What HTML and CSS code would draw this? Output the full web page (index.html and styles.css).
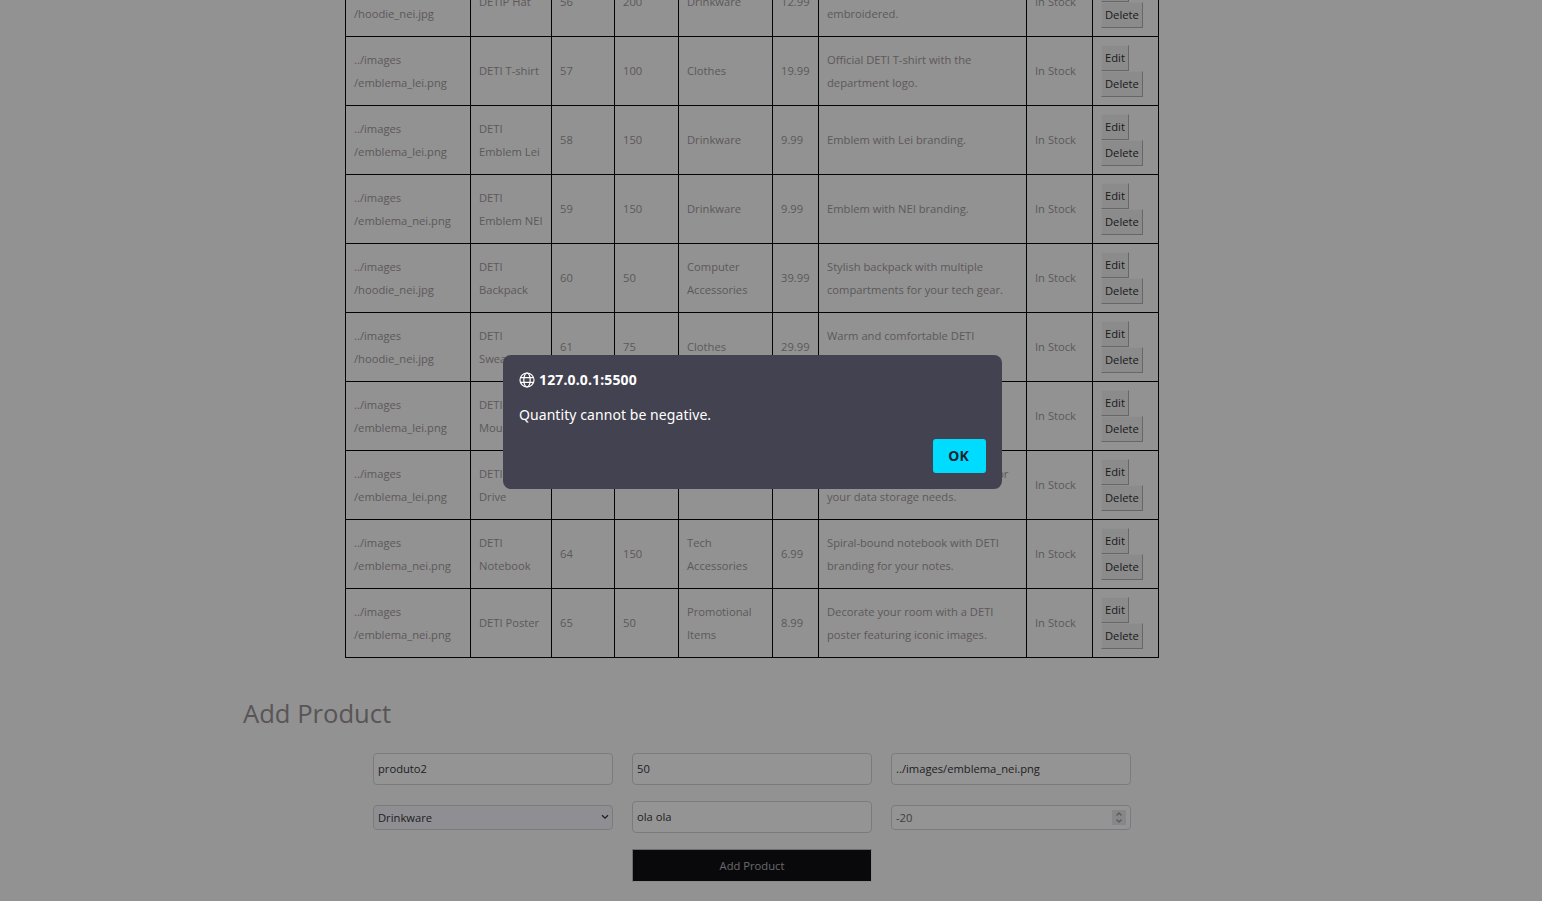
FILE: index.html
```html
<!DOCTYPE html>
<html lang="en">
<head>
    <meta charset="UTF-8">
    <title>Admin Products</title>
    <link rel="stylesheet" href="styles.css">
</head>
<body>
    <div class="page">
        <table class="products">
            <colgroup>
                <col class="c-img"><col class="c-name"><col class="c-id"><col class="c-qty"><col class="c-cat">
                <col class="c-price"><col class="c-desc"><col class="c-stock"><col class="c-act">
            </colgroup>
            <tbody>
                <tr>
                    <td>../images<wbr>/hoodie_nei.jpg</td><td>DETIP Hat</td><td>56</td><td>200</td><td>Drinkware</td><td>12.99</td>
                    <td>Comfortable hat with DETI logo embroidered.</td><td>In Stock</td>
                    <td><button class="act">Edit</button> <button class="act">Delete</button></td>
                </tr>
                <tr>
                    <td>../images<wbr>/emblema_lei.png</td><td>DETI T-shirt</td><td>57</td><td>100</td><td>Clothes</td><td>19.99</td>
                    <td>Official DETI T-shirt with the department logo.</td><td>In Stock</td>
                    <td><button class="act">Edit</button> <button class="act">Delete</button></td>
                </tr>
                <tr>
                    <td>../images<wbr>/emblema_lei.png</td><td>DETI Emblem Lei</td><td>58</td><td>150</td><td>Drinkware</td><td>9.99</td>
                    <td>Emblem with Lei branding.</td><td>In Stock</td>
                    <td><button class="act">Edit</button> <button class="act">Delete</button></td>
                </tr>
                <tr>
                    <td>../images<wbr>/emblema_nei.png</td><td>DETI Emblem NEI</td><td>59</td><td>150</td><td>Drinkware</td><td>9.99</td>
                    <td>Emblem with NEI branding.</td><td>In Stock</td>
                    <td><button class="act">Edit</button> <button class="act">Delete</button></td>
                </tr>
                <tr>
                    <td>../images<wbr>/hoodie_nei.jpg</td><td>DETI Backpack</td><td>60</td><td>50</td><td>Computer Accessories</td><td>39.99</td>
                    <td>Stylish backpack with multiple compartments for your tech gear.</td><td>In Stock</td>
                    <td><button class="act">Edit</button> <button class="act">Delete</button></td>
                </tr>
                <tr>
                    <td>../images<wbr>/hoodie_nei.jpg</td><td>DETI Sweatshirt</td><td>61</td><td>75</td><td>Clothes</td><td>29.99</td>
                    <td>Warm and comfortable DETI sweatshirt.</td><td>In Stock</td>
                    <td><button class="act">Edit</button> <button class="act">Delete</button></td>
                </tr>
                <tr>
                    <td>../images<wbr>/emblema_lei.png</td><td>DETI Mousepad</td><td>62</td><td>120</td><td>Electronics</td><td>5.99</td>
                    <td>Smooth mouse pad featuring the DETI logo on top.</td><td>In Stock</td>
                    <td><button class="act">Edit</button> <button class="act">Delete</button></td>
                </tr>
                <tr>
                    <td>../images<wbr>/emblema_lei.png</td><td>DETI USB Drive</td><td>63</td><td>80</td><td>Electronics</td><td>14.99</td>
                    <td>High-capacity USB drive perfect for your data storage needs.</td><td>In Stock</td>
                    <td><button class="act">Edit</button> <button class="act">Delete</button></td>
                </tr>
                <tr>
                    <td>../images<wbr>/emblema_nei.png</td><td>DETI Notebook</td><td>64</td><td>150</td><td>Tech Accessories</td><td>6.99</td>
                    <td>Spiral-bound notebook with DETI branding for your notes.</td><td>In Stock</td>
                    <td><button class="act">Edit</button> <button class="act">Delete</button></td>
                </tr>
                <tr>
                    <td>../images<wbr>/emblema_nei.png</td><td>DETI Poster</td><td>65</td><td>50</td><td>Promotional Items</td><td>8.99</td>
                    <td>Decorate your room with a DETI poster featuring iconic images.</td><td>In Stock</td>
                    <td><button class="act">Edit</button> <button class="act">Delete</button></td>
                </tr>
            </tbody>
        </table>

        <h2 class="form-title">Add Product</h2>
        <form class="add-form">
            <input type="text" value="produto2">
            <input type="text" value="50">
            <input type="text" value="../images/emblema_nei.png">
            <select>
                <option>Drinkware</option>
                <option>Clothes</option>
            </select>
            <input type="text" value="ola ola">
            <input type="number" value="-20">
            <button type="button" class="submit">Add Product</button>
        </form>
    </div>

    <div class="overlay">
        <div class="dialog">
            <div class="dialog-origin">
                <svg class="globe" viewBox="0 0 16 16" fill="none" stroke="currentColor" stroke-width="1.2">
                    <circle cx="8" cy="8" r="7"/>
                    <ellipse cx="8" cy="8" rx="3.2" ry="7"/>
                    <path d="M1.4 5.6h13.2M1.4 10.4h13.2"/>
                </svg>
                <span>127.0.0.1:5500</span>
            </div>
            <p class="dialog-msg">Quantity cannot be negative.</p>
            <div class="dialog-actions">
                <button class="ok">OK</button>
            </div>
        </div>
    </div>
</body>
</html>
```

FILE: styles.css
```css
html, body {
    height: 100%;
}
body {
    margin: 0;
    overflow: hidden;
    background-color: #fbfbfb;
    font-family: "Open Sans", sans-serif;
    font-size: 11.2px;
    color: #a09896;
}
.page {
    width: 1018px;
    margin-left: 243px;
}

/* table is scrolled, first row is cut by the top of the window */
.products {
    width: 814px;
    margin: -33px auto 0;
    border-collapse: collapse;
    table-layout: fixed;
    line-height: 23px;
}
.products td {
    border: 1px solid #000;
    padding: 8px 8px 9px;
}
.products td:last-child {
    padding-bottom: 8px;
}
.c-img { width: 125px; }
.c-name { width: 81px; }
.c-id { width: 63px; }
.c-qty { width: 64px; }
.c-cat { width: 94px; }
.c-price { width: 46px; }
.c-desc { width: 208px; }
.c-stock { width: 66px; }
.c-act { width: 66px; }

.act {
    font-family: "Open Sans", sans-serif;
    font-size: 11.2px;
    line-height: 16px;
    height: 26px;
    padding: 1px 3px;
    color: #2b2b2b;
    background-color: #f0f0f0;
    border: 1px solid;
    border-color: #f8f8f8 #b0b0b0 #b0b0b0 #f8f8f8;
    vertical-align: middle;
}

.form-title {
    margin: 38px 0 0;
    font-size: 25.6px;
    font-weight: 400;
    line-height: 36px;
    color: #979090;
}
.add-form {
    display: grid;
    grid-template-columns: repeat(3, 240px);
    column-gap: 19px;
    row-gap: 16px;
    justify-content: center;
    align-items: center;
    margin-top: 21px;
}
.add-form input, .add-form select {
    box-sizing: border-box;
    width: 100%;
    font-family: "Open Sans", sans-serif;
    font-size: 11.2px;
    color: #333;
    background-color: #fff;
    border: 1px solid #d4d4d6;
    border-radius: 4px;
    padding: 0 4px;
}
.add-form input[type="text"] {
    height: 32px;
    padding-bottom: 1px;
}
.add-form select {
    height: 25px;
    appearance: none;
    background-color: #f6f6fb;
    background-image: url("data:image/svg+xml,%3Csvg xmlns='http://www.w3.org/2000/svg' width='8' height='6' viewBox='0 0 8 6'%3E%3Cpath d='M1 1.2l3 3 3-3' fill='none' stroke='%23333' stroke-width='1.3'/%3E%3C/svg%3E");
    background-repeat: no-repeat;
    background-position: right 3px center;
    grid-column: 1;
}
.add-form input[type="number"] {
    height: 25px;
    color: #6a6a6a;
}
.add-form input[type="number"]::-webkit-inner-spin-button {
    appearance: none;
    opacity: 1;
    width: 14px;
    height: 15px;
    background-color: #e9e9ec;
    background-image: url("data:image/svg+xml,%3Csvg xmlns='http://www.w3.org/2000/svg' width='14' height='15' viewBox='0 0 14 15'%3E%3Cpath d='M4.5 5.5L7 3l2.5 2.5M4.5 9.5L7 12l2.5-2.5' fill='none' stroke='%23999' stroke-width='1.3'/%3E%3C/svg%3E");
}
.submit {
    grid-column: 2;
    height: 33px;
    font-family: "Open Sans", sans-serif;
    font-size: 11.2px;
    color: #b3b3b3;
    background-color: #0c0c0f;
    border-style: solid;
    border-width: 1px;
    border-color: #bbbbbb #f0f0f0 #f0f0f0 #bbbbbb;
}

/* alert box */
.overlay {
    position: fixed;
    inset: 0;
    background-color: rgba(8, 8, 9, 0.43);
}
.dialog {
    position: absolute;
    left: 503px;
    top: 355px;
    box-sizing: border-box;
    width: 499px;
    height: 134px;
    padding: 16px;
    border-radius: 8px;
    background-color: #434250;
    color: #fff;
    font-family: "Noto Sans", sans-serif;
}
.dialog-origin {
    display: flex;
    align-items: center;
    gap: 4px;
    font-size: 14px;
    font-weight: 700;
    line-height: 18px;
    letter-spacing: 0.15px;
}
.globe {
    width: 16px;
    height: 16px;
}
.dialog-msg {
    margin: 17px 0 0;
    font-size: 14px;
    line-height: 18px;
    letter-spacing: 0.07px;
}
.dialog-actions {
    display: flex;
    justify-content: flex-end;
    margin-top: 15px;
}
.ok {
    width: 53px;
    height: 34px;
    padding: 0 2px 2px 0;
    border: none;
    border-radius: 3px;
    background-color: #00dcff;
    color: #1d2430;
    font-family: "Noto Sans", sans-serif;
    font-size: 14px;
    font-weight: 700;
}
```
